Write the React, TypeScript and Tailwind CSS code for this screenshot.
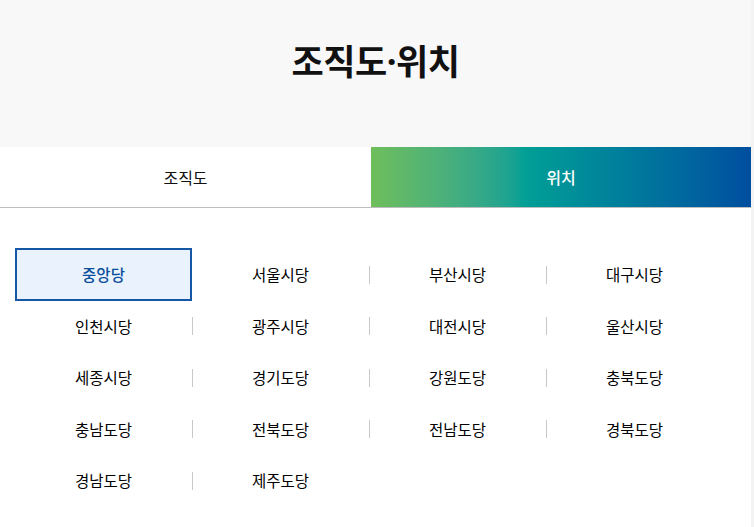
const regions = [
  "중앙당",
  "서울시당",
  "부산시당",
  "대구시당",
  "인천시당",
  "광주시당",
  "대전시당",
  "울산시당",
  "세종시당",
  "경기도당",
  "강원도당",
  "충북도당",
  "충남도당",
  "전북도당",
  "전남도당",
  "경북도당",
  "경남도당",
  "제주도당",
];

export default function App() {
  const active = "중앙당";

  return (
    <div className="flex min-h-[527px] w-[754px] bg-[#f3f3f3] font-['Noto_Sans_CJK_KR','Noto_Sans',sans-serif] text-[#111]">
      <div className="w-[751px] bg-white">
        <header className="flex h-[147px] items-center justify-center bg-[#f8f8f8] pb-[25px]">
          <h1 className="text-[35px] font-bold tracking-[-0.5px] text-[#111]">
            조직도<span className="font-['Noto_Sans',sans-serif]">·</span>위치
          </h1>
        </header>

        <nav className="flex h-[61px] border-b border-[#bdbdbd]">
          <button className="flex w-[371px] items-center justify-center bg-white text-[16px] text-[#111]" type="button">
            조직도
          </button>
          <button
            className="flex flex-1 items-center justify-center bg-linear-to-r from-[#6ebe5a] via-[#04a095] via-40% to-[#004e9f] text-[16px] font-medium text-white"
            type="button"
          >
            위치
          </button>
        </nav>

        <ul className="ml-[15px] mt-[41px] grid w-[708px] grid-cols-4">
          {regions.map((region, index) => {
            const isActive = region === active;
            return (
              <li className="relative flex h-[51.5px] items-center justify-center" key={region}>
                {index % 4 !== 0 && index !== 1 ? (
                  <span className="absolute left-0 top-1/2 h-[18px] w-px -translate-y-1/2 bg-[#c8c8c8]" />
                ) : null}
                {isActive ? (
                  <span className="flex h-[53px] w-[178px] items-center justify-center border-2 border-solid border-[#1458a5] bg-[#eaf3fd] text-[15.5px] font-medium text-[#0b4f9c]">
                    {region}
                  </span>
                ) : (
                  <span className="text-[15.5px] text-black">{region}</span>
                )}
              </li>
            );
          })}
        </ul>
      </div>
    </div>
  );
}
